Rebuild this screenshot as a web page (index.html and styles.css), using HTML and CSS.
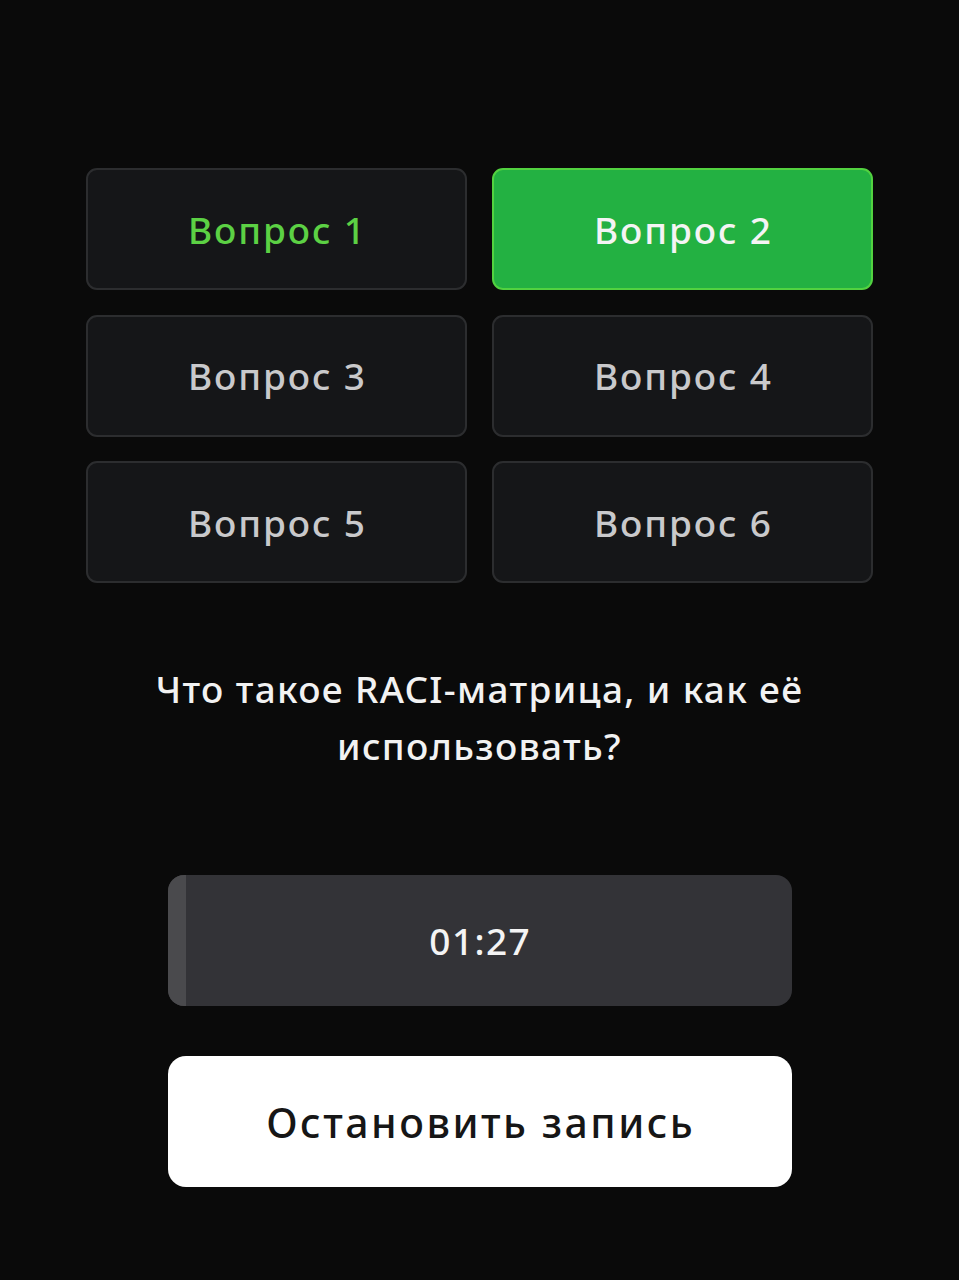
FILE: index.html
```html
<!DOCTYPE html>
<html lang="ru">
<head>
<meta charset="utf-8">
<link rel="stylesheet" href="styles.css">
</head>
<body>
<main class="screen">
  <div class="questions">
    <button class="q q-done">Вопрос 1</button>
    <button class="q q-active">Вопрос 2</button>
    <button class="q">Вопрос 3</button>
    <button class="q">Вопрос 4</button>
    <button class="q">Вопрос 5</button>
    <button class="q">Вопрос 6</button>
  </div>
  <p class="question-text">Что такое RACI-матрица, и как её<br>использовать?</p>
  <div class="timer">
    <div class="timer-progress" style="width: 18px"></div>
    <span class="timer-text">01:27</span>
  </div>
  <button class="stop">Остановить запись</button>
</main>
</body>
</html>
```

FILE: styles.css
```css
html, body {
  margin: 0;
  padding: 0;
  background: #0a0a0a;
}
body {
  font-family: "Noto Sans", "Open Sans", sans-serif;
  width: 959px;
  height: 1280px;
  overflow: hidden;
}
.screen {
  display: flex;
  flex-direction: column;
  align-items: center;
  padding-top: 168px;
}
.questions {
  display: grid;
  grid-template-columns: 381px 381px;
  grid-auto-rows: 122px;
  column-gap: 25px;
  row-gap: 24.5px;
}
.q {
  box-sizing: border-box;
  border: 2px solid #2c2d2f;
  border-radius: 11px;
  background: #151618;
  color: #c9c9cb;
  font-family: inherit;
  font-size: 37px;
  font-weight: 500;
  letter-spacing: 1.9px;
  padding: 0 0 0 1.9px;
  margin: 0;
  display: flex;
  align-items: center;
  justify-content: center;
}
.q-done {
  color: #5cd144;
}
.q-active {
  background: #23b142;
  border-color: #52d240;
  color: #f4f4f4;
}
.question-text {
  margin: 77px 0 0;
  color: #f2f2f2;
  font-size: 37px;
  font-weight: 500;
  letter-spacing: 1.35px;
  line-height: 57px;
  text-align: center;
}
.timer {
  margin-top: 101px;
  width: 624px;
  height: 131px;
  border-radius: 16px;
  background: #333337;
  position: relative;
  overflow: hidden;
  display: flex;
  align-items: center;
  justify-content: center;
}
.timer-progress {
  position: absolute;
  left: 0;
  top: 0;
  bottom: 0;
  background: #4a4a4d;
}
.timer-text {
  position: relative;
  color: #f4f4f4;
  font-size: 37px;
  font-weight: 500;
  letter-spacing: 1.4px;
  padding-left: 1.4px;
}
.stop {
  margin-top: 50px;
  width: 624px;
  height: 131px;
  border: 0;
  border-radius: 18px;
  background: #ffffff;
  color: #161616;
  font-family: inherit;
  font-size: 41px;
  font-weight: 500;
  letter-spacing: 2.5px;
  padding: 0 0 0 2.5px;
}
```
